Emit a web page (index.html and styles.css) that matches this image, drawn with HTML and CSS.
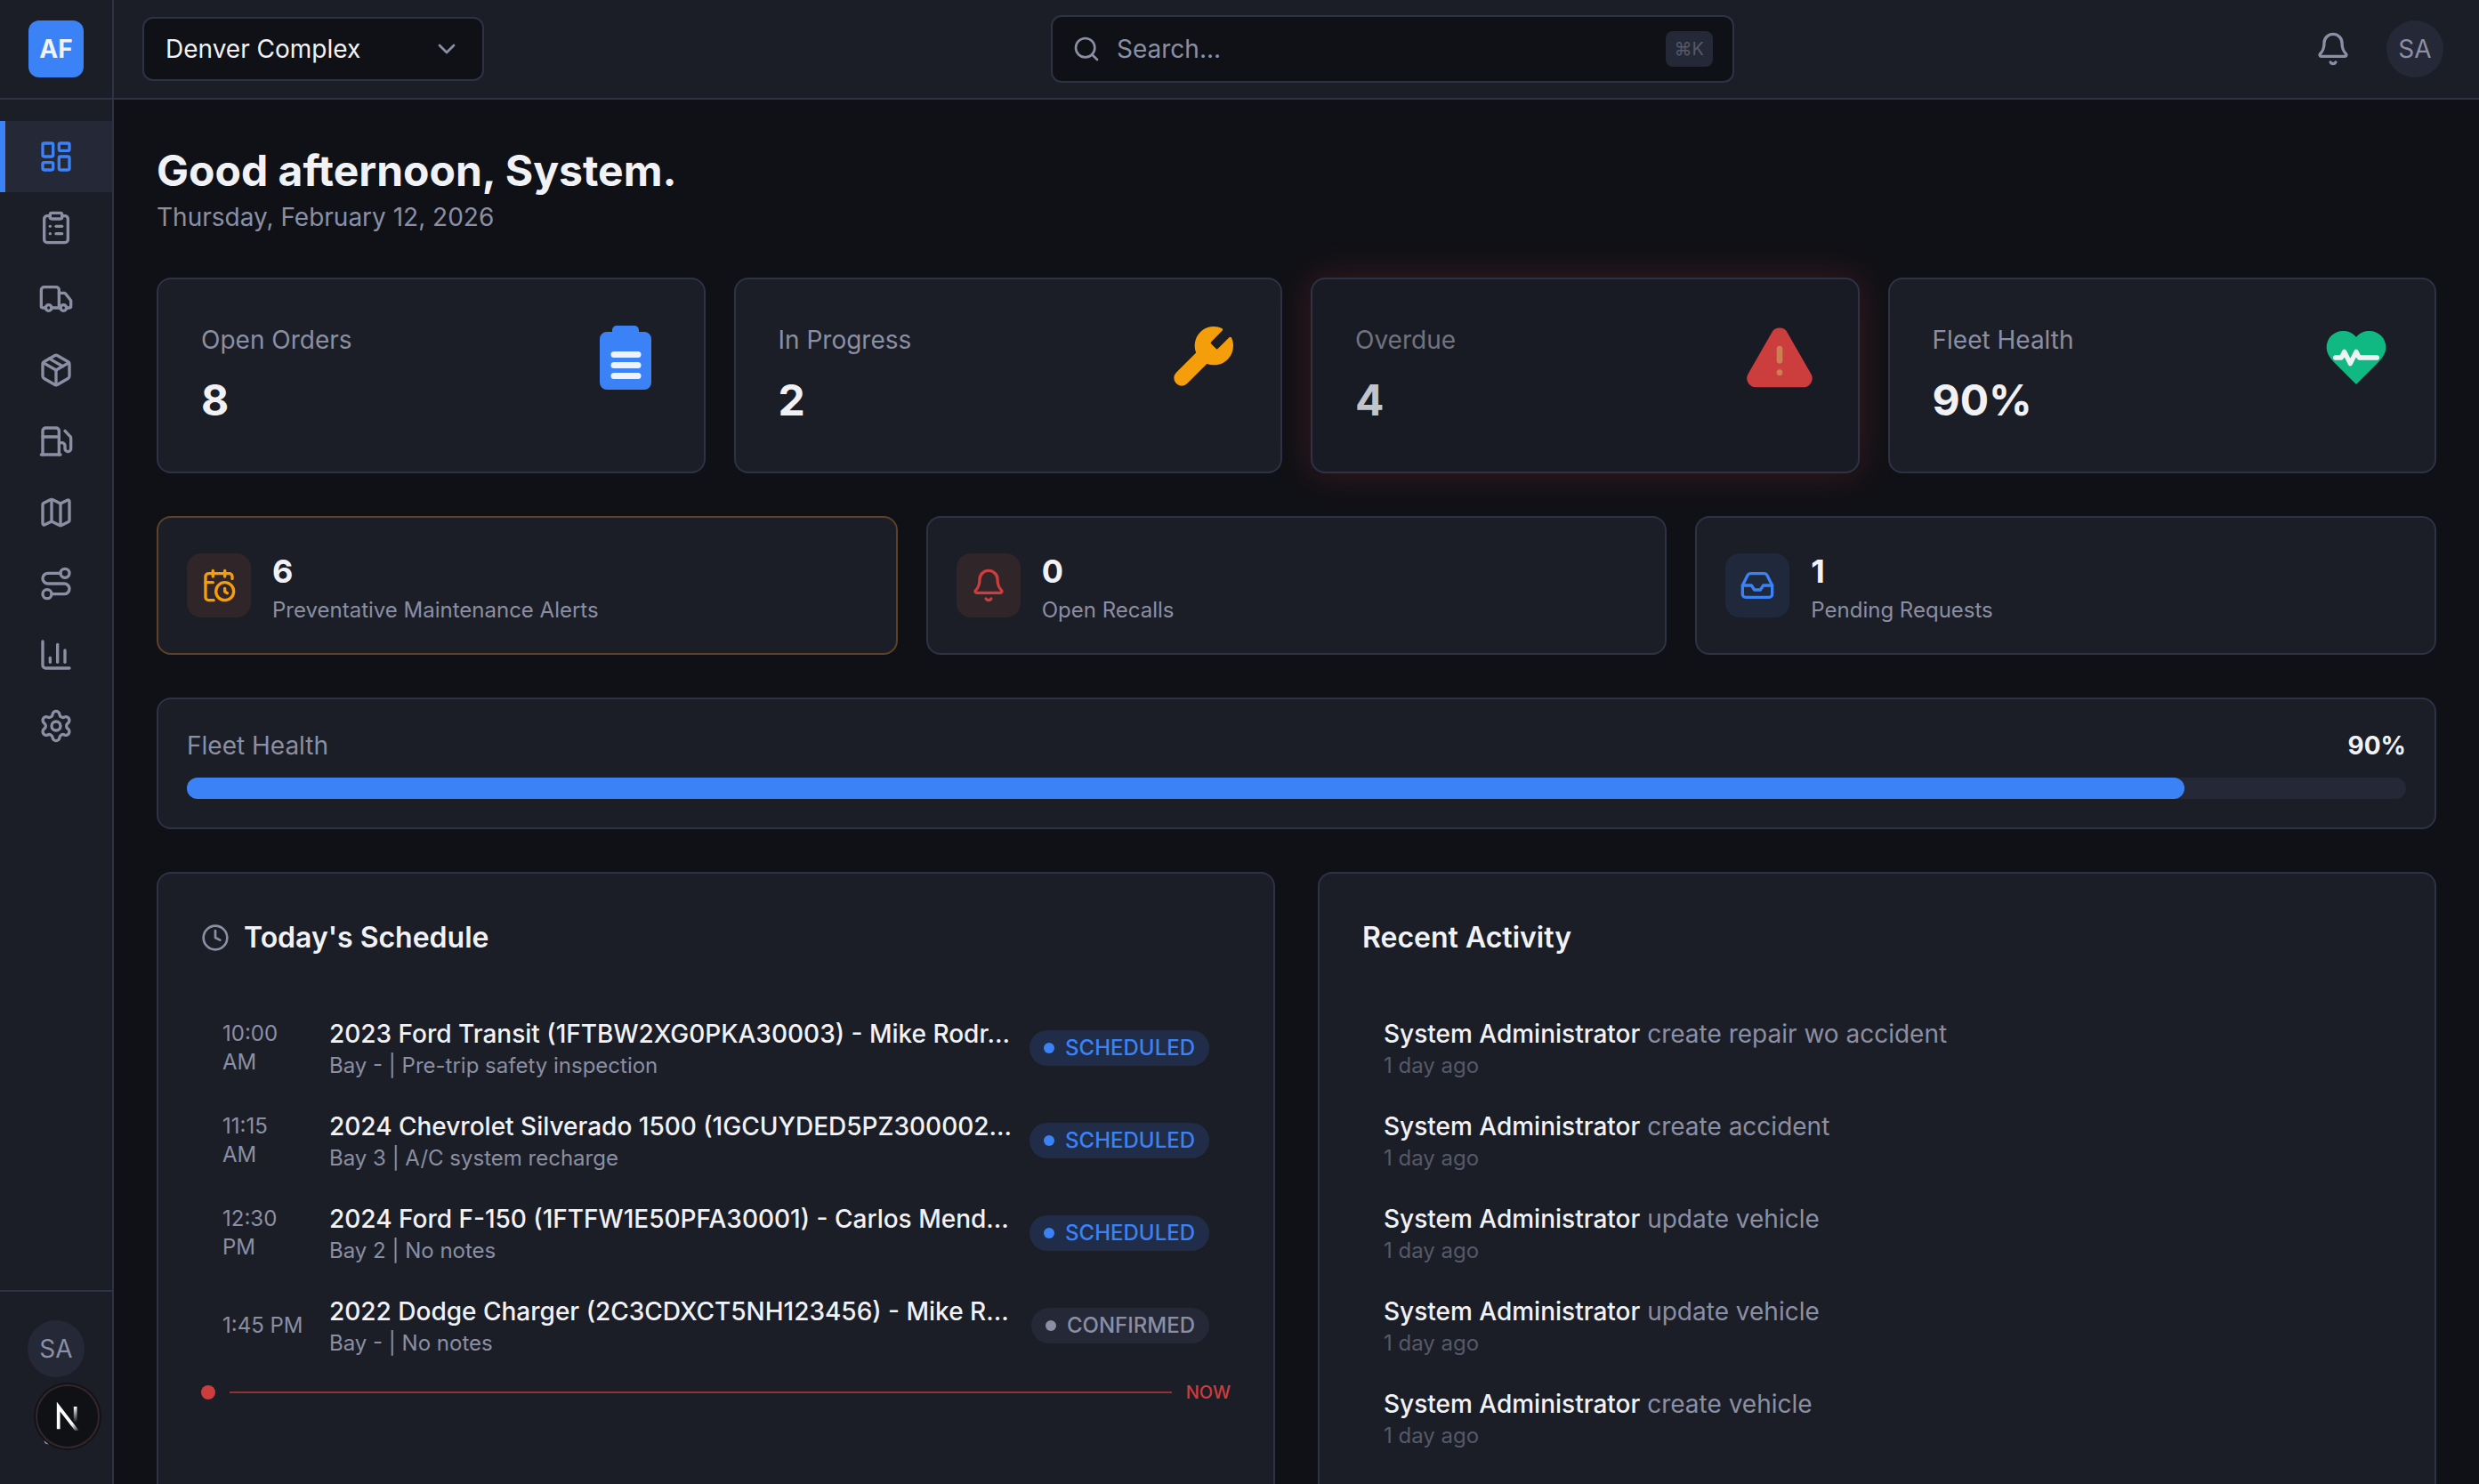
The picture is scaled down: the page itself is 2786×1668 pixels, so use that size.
FILE: index.html
```html
<!DOCTYPE html>
<html lang="en">
<head>
    <meta charset="UTF-8">
    <meta name="viewport" content="width=device-width, initial-scale=1.0">
    <title>Dashboard</title>
    <link rel="stylesheet" href="styles.css">
</head>
<body>
    <div class="app">
        <aside class="sidebar">
            <div class="brand">
                <a class="logo" href="#">AF</a>
            </div>

            <nav class="nav" aria-label="Main">
                <a class="nav-item active" href="#" aria-label="Dashboard">
                    <svg class="icon" viewBox="0 0 24 24"><rect x="3" y="3" width="7" height="9" rx="1"/><rect x="14" y="3" width="7" height="5" rx="1"/><rect x="14" y="12" width="7" height="9" rx="1"/><rect x="3" y="16" width="7" height="5" rx="1"/></svg>
                </a>
                <a class="nav-item" href="#" aria-label="Work orders">
                    <svg class="icon" viewBox="0 0 24 24"><rect x="8" y="2" width="8" height="4" rx="1"/><path d="M16 4h2a2 2 0 0 1 2 2v14a2 2 0 0 1-2 2H6a2 2 0 0 1-2-2V6a2 2 0 0 1 2-2h2"/><path d="M12 11h4"/><path d="M12 16h4"/><path d="M8 11h.01"/><path d="M8 16h.01"/></svg>
                </a>
                <a class="nav-item" href="#" aria-label="Vehicles">
                    <svg class="icon" viewBox="0 0 24 24"><path d="M14 18V6a2 2 0 0 0-2-2H4a2 2 0 0 0-2 2v11a1 1 0 0 0 1 1h2"/><path d="M15 18H9"/><path d="M19 18h2a1 1 0 0 0 1-1v-3.65a1 1 0 0 0-.22-.624l-3.48-4.35A1 1 0 0 0 17.52 8H14"/><circle cx="17" cy="18" r="2"/><circle cx="7" cy="18" r="2"/></svg>
                </a>
                <a class="nav-item" href="#" aria-label="Parts">
                    <svg class="icon" viewBox="0 0 24 24"><path d="M11 21.73a2 2 0 0 0 2 0l7-4A2 2 0 0 0 21 16V8a2 2 0 0 0-1-1.73l-7-4a2 2 0 0 0-2 0l-7 4A2 2 0 0 0 3 8v8a2 2 0 0 0 1 1.73z"/><path d="M12 22V12"/><path d="M3.29 7 12 12l8.71-5"/><path d="m7.5 4.27 9 5.15"/></svg>
                </a>
                <a class="nav-item" href="#" aria-label="Fuel">
                    <svg class="icon" viewBox="0 0 24 24"><path d="M14 13h2a2 2 0 0 1 2 2v2a2 2 0 0 0 4 0v-6.998a2 2 0 0 0-.59-1.42L18 5"/><path d="M14 21V5a2 2 0 0 0-2-2H5a2 2 0 0 0-2 2v16"/><path d="M2 21h13"/><path d="M3 9h11"/></svg>
                </a>
                <a class="nav-item" href="#" aria-label="Map">
                    <svg class="icon" viewBox="0 0 24 24"><path d="M14.106 5.553a2 2 0 0 0 1.788 0l3.659-1.83A1 1 0 0 1 21 4.619v12.764a1 1 0 0 1-.553.894l-4.553 2.277a2 2 0 0 1-1.788 0l-4.212-2.106a2 2 0 0 0-1.788 0l-3.659 1.83A1 1 0 0 1 3 19.381V6.618a1 1 0 0 1 .553-.894l4.553-2.277a2 2 0 0 1 1.788 0z"/><path d="M15 5.764v15"/><path d="M9 3.236v15"/></svg>
                </a>
                <a class="nav-item" href="#" aria-label="Routes">
                    <svg class="icon" viewBox="0 0 24 24"><circle cx="6" cy="19" r="3"/><path d="M9 19h8.5a3.5 3.5 0 0 0 0-7h-11a3.5 3.5 0 0 1 0-7H15"/><circle cx="18" cy="5" r="3"/></svg>
                </a>
                <a class="nav-item" href="#" aria-label="Reports">
                    <svg class="icon" viewBox="0 0 24 24"><path d="M3 3v16a2 2 0 0 0 2 2h16"/><path d="M18 17V9"/><path d="M13 17V5"/><path d="M8 17v-3"/></svg>
                </a>
                <a class="nav-item" href="#" aria-label="Settings">
                    <svg class="icon" viewBox="0 0 24 24"><path d="M9.671 4.136a2.34 2.34 0 0 1 4.659 0 2.34 2.34 0 0 0 3.319 1.915 2.34 2.34 0 0 1 2.33 4.033 2.34 2.34 0 0 0 0 3.831 2.34 2.34 0 0 1-2.33 4.033 2.34 2.34 0 0 0-3.319 1.915 2.34 2.34 0 0 1-4.659 0 2.34 2.34 0 0 0-3.32-1.915 2.34 2.34 0 0 1-2.33-4.033 2.34 2.34 0 0 0 0-3.831A2.34 2.34 0 0 1 6.35 6.051a2.34 2.34 0 0 0 3.319-1.915"/><circle cx="12" cy="12" r="3"/></svg>
                </a>
            </nav>

            <div class="sidebar-footer">
                <span class="avatar">SA</span>
                <button class="logout" type="button" aria-label="Log out">
                    <svg class="icon icon-sm" viewBox="0 0 24 24"><path d="m16 17 5-5-5-5"/><path d="M21 12H9"/><path d="M9 21H5a2 2 0 0 1-2-2V5a2 2 0 0 1 2-2h4"/></svg>
                </button>
            </div>
        </aside>

        <div class="page">
            <header class="topbar">
                <div class="location">
                    <select class="location-select" aria-label="Location">
                        <option>Denver Complex</option>
                    </select>
                    <svg class="icon icon-sm location-chevron" viewBox="0 0 24 24"><path d="m6 9 6 6 6-6"/></svg>
                </div>

                <label class="search">
                    <svg class="icon icon-sm" viewBox="0 0 24 24"><path d="m21 21-4.34-4.34"/><circle cx="11" cy="11" r="8"/></svg>
                    <input class="search-input" type="text" placeholder="Search..." aria-label="Search">
                    <kbd class="search-key">⌘K</kbd>
                </label>

                <div class="topbar-actions">
                    <button class="bell-button" type="button" aria-label="Notifications">
                        <svg class="icon" viewBox="0 0 24 24"><path d="M10.268 21a2 2 0 0 0 3.464 0"/><path d="M3.262 15.326A1 1 0 0 0 4 17h16a1 1 0 0 0 .74-1.673C19.41 13.956 18 12.499 18 8A6 6 0 0 0 6 8c0 4.499-1.411 5.956-2.738 7.326"/></svg>
                    </button>
                    <button class="avatar" type="button">SA</button>
                </div>
            </header>

            <main class="content">
                <div class="greeting">
                    <h1>Good afternoon, System.</h1>
                    <p>Thursday, February 12, 2026</p>
                </div>

                <section class="stats">
                    <div class="card stat">
                        <div>
                            <div class="stat-label">Open Orders</div>
                            <div class="stat-value">8</div>
                        </div>
                        <svg class="stat-icon" viewBox="0 0 80 80">
                            <path class="fill-blue" d="M30 4h20a5 5 0 0 1 5 5v2h6a8 8 0 0 1 8 8v49a8 8 0 0 1-8 8H19a8 8 0 0 1-8-8V19a8 8 0 0 1 8-8h6V9a5 5 0 0 1 5-5z"/>
                            <path class="lines" d="M27 36.5h27M27 48.5h27M27 60.5h27"/>
                        </svg>
                    </div>
                    <div class="card stat">
                        <div>
                            <div class="stat-label">In Progress</div>
                            <div class="stat-value">2</div>
                        </div>
                        <svg class="stat-icon" viewBox="0 0 24 24">
                            <path class="wrench" d="M14.7 6.3a1 1 0 0 0 0 1.4l1.6 1.6a1 1 0 0 0 1.4 0l3.77-3.77a6 6 0 0 1-7.94 7.94l-6.91 6.91a2.12 2.12 0 0 1-3-3l6.91-6.91a6 6 0 0 1 7.94-7.94l-3.76 3.76z"/>
                        </svg>
                    </div>
                    <div class="card stat overdue">
                        <div>
                            <div class="stat-label">Overdue</div>
                            <div class="stat-value">4</div>
                        </div>
                        <svg class="stat-icon" viewBox="0 0 24 24">
                            <path class="warning" d="m21.73 18-8-14a2 2 0 0 0-3.48 0l-8 14A2 2 0 0 0 4 21h16a2 2 0 0 0 1.73-3"/>
                            <path class="warning-mark" d="M12 9v4M12 17h.01"/>
                        </svg>
                    </div>
                    <div class="card stat">
                        <div>
                            <div class="stat-label">Fleet Health</div>
                            <div class="stat-value">90%</div>
                        </div>
                        <svg class="stat-icon" viewBox="0 0 24 24">
                            <path class="fill-green" d="M19 14c1.49-1.46 3-3.21 3-5.5A5.5 5.5 0 0 0 16.5 3c-1.76 0-3 .5-4.5 2-1.5-1.5-2.74-2-4.5-2A5.5 5.5 0 0 0 2 8.5c0 2.3 1.5 4.05 3 5.5l7 7Z"/>
                            <path class="pulse" d="M5 12h2l1-2 2 4 2-4 1 2h6"/>
                        </svg>
                    </div>
                </section>

                <section class="alerts">
                    <div class="card alert alert-warning">
                        <span class="alert-icon orange">
                            <svg class="icon" viewBox="0 0 24 24"><path d="M16 14v2.2l1.6 1"/><path d="M16 2v4"/><path d="M21 7.5V6a2 2 0 0 0-2-2H5a2 2 0 0 0-2 2v14a2 2 0 0 0 2 2h3.5"/><path d="M3 10h5"/><path d="M8 2v4"/><circle cx="16" cy="16" r="6"/></svg>
                        </span>
                        <div>
                            <div class="alert-value">6</div>
                            <div class="alert-label">Preventative Maintenance Alerts</div>
                        </div>
                    </div>
                    <div class="card alert">
                        <span class="alert-icon red">
                            <svg class="icon" viewBox="0 0 24 24"><path d="M10.268 21a2 2 0 0 0 3.464 0"/><path d="M3.262 15.326A1 1 0 0 0 4 17h16a1 1 0 0 0 .74-1.673C19.41 13.956 18 12.499 18 8A6 6 0 0 0 6 8c0 4.499-1.411 5.956-2.738 7.326"/></svg>
                        </span>
                        <div>
                            <div class="alert-value">0</div>
                            <div class="alert-label">Open Recalls</div>
                        </div>
                    </div>
                    <div class="card alert">
                        <span class="alert-icon blue">
                            <svg class="icon" viewBox="0 0 24 24"><path d="M22 12h-6l-2 3h-4l-2-3H2"/><path d="M5.45 5.11 2 12v6a2 2 0 0 0 2 2h16a2 2 0 0 0 2-2v-6l-3.45-6.89A2 2 0 0 0 16.76 4H7.24a2 2 0 0 0-1.79 1.11z"/></svg>
                        </span>
                        <div>
                            <div class="alert-value">1</div>
                            <div class="alert-label">Pending Requests</div>
                        </div>
                    </div>
                </section>

                <section class="card health">
                    <div class="health-head">
                        <span class="health-label">Fleet Health</span>
                        <span class="health-value">90%</span>
                    </div>
                    <div class="health-track">
                        <div class="health-bar" style="width: 90%"></div>
                    </div>
                </section>

                <section class="panels">
                    <div class="card panel">
                        <h2>
                            <svg class="icon icon-sm" viewBox="0 0 24 24"><circle cx="12" cy="12" r="10"/><path d="M12 6v6l4 2"/></svg>
                            Today's Schedule
                        </h2>
                        <div class="schedule-row">
                            <div class="time">10:00<br>AM</div>
                            <div class="job">
                                <div class="job-title">2023 Ford Transit (1FTBW2XG0PKA30003) - Mike Rodr...</div>
                                <div class="job-note">Bay - | Pre-trip safety inspection</div>
                            </div>
                            <span class="badge scheduled">SCHEDULED</span>
                        </div>
                        <div class="schedule-row">
                            <div class="time">11:15<br>AM</div>
                            <div class="job">
                                <div class="job-title">2024 Chevrolet Silverado 1500 (1GCUYDED5PZ300002...</div>
                                <div class="job-note">Bay 3 | A/C system recharge</div>
                            </div>
                            <span class="badge scheduled">SCHEDULED</span>
                        </div>
                        <div class="schedule-row">
                            <div class="time">12:30<br>PM</div>
                            <div class="job">
                                <div class="job-title">2024 Ford F-150 (1FTFW1E50PFA30001) - Carlos Mend...</div>
                                <div class="job-note">Bay 2 | No notes</div>
                            </div>
                            <span class="badge scheduled">SCHEDULED</span>
                        </div>
                        <div class="schedule-row">
                            <div class="time">1:45 PM</div>
                            <div class="job">
                                <div class="job-title">2022 Dodge Charger (2C3CDXCT5NH123456) - Mike R...</div>
                                <div class="job-note">Bay - | No notes</div>
                            </div>
                            <span class="badge">CONFIRMED</span>
                        </div>
                        <div class="now">
                            <span class="now-dot"></span>
                            <span class="now-line"></span>
                            <span>NOW</span>
                        </div>
                    </div>

                    <div class="card panel">
                        <h2>Recent Activity</h2>
                        <div class="activity">
                            <div class="activity-text"><b>System Administrator</b> create repair wo accident</div>
                            <div class="activity-time">1 day ago</div>
                        </div>
                        <div class="activity">
                            <div class="activity-text"><b>System Administrator</b> create accident</div>
                            <div class="activity-time">1 day ago</div>
                        </div>
                        <div class="activity">
                            <div class="activity-text"><b>System Administrator</b> update vehicle</div>
                            <div class="activity-time">1 day ago</div>
                        </div>
                        <div class="activity">
                            <div class="activity-text"><b>System Administrator</b> update vehicle</div>
                            <div class="activity-time">1 day ago</div>
                        </div>
                        <div class="activity">
                            <div class="activity-text"><b>System Administrator</b> create vehicle</div>
                            <div class="activity-time">1 day ago</div>
                        </div>
                    </div>
                </section>
            </main>
        </div>
    </div>

    <!-- dev tools badge -->
    <button class="dev-badge" type="button" aria-label="Open dev tools">
        <svg viewBox="-0.5 -1.5 16 16">
            <defs>
                <linearGradient id="fade-diagonal" gradientUnits="userSpaceOnUse" x1="9.9" y1="11" x2="13.4" y2="15.4">
                    <stop stop-color="#fff"/>
                    <stop offset="1" stop-color="#fff" stop-opacity="0"/>
                </linearGradient>
                <linearGradient id="fade-stem" gradientUnits="userSpaceOnUse" x1="12" y1="1" x2="12" y2="10">
                    <stop stop-color="#fff"/>
                    <stop offset="1" stop-color="#fff" stop-opacity="0"/>
                </linearGradient>
            </defs>
            <path d="M13.3 15.2 2.34 1v12.6" fill="none" stroke="url(#fade-diagonal)" stroke-width="1.86"/>
            <rect x="10.9" y="1" width="1.86" height="11.6" fill="url(#fade-stem)"/>
        </svg>
    </button>
</body>
</html>
```
FILE: styles.css
```css
:root {
    --bg: #101116;
    --surface: #1c1e27;
    --raised: #252836;
    --border: #2e3245;
    --text: #f1f2f6;
    --muted: #8b8fa3;
    --faint: #555969;
    --blue: #3b82f6;
    --orange: #f59e0b;
    --red: #cc3d3d;
    --green: #10b981;
}

* {
    box-sizing: border-box;
}

body {
    margin: 0;
    font-family: Inter, "Liberation Sans", sans-serif;
    font-size: 28px;
    line-height: 40px;
    background-color: var(--bg);
    color: var(--text);
}

h1, h2, p {
    margin: 0;
}

button, input, select, kbd {
    font-family: inherit;
    font-size: inherit;
    color: inherit;
}

button {
    border: none;
    padding: 0;
    background: none;
    cursor: pointer;
}

a {
    color: inherit;
    text-decoration: none;
}

.icon {
    width: 40px;
    height: 40px;
    flex-shrink: 0;
    fill: none;
    stroke: currentColor;
    stroke-width: 2;
    stroke-linecap: round;
    stroke-linejoin: round;
}

.icon-sm {
    width: 32px;
    height: 32px;
}

.app {
    display: flex;
    height: 100vh;
    overflow: hidden;
}

/* sidebar */
.sidebar {
    width: 128px;
    flex-shrink: 0;
    display: flex;
    flex-direction: column;
    background-color: var(--surface);
    border-right: 2px solid var(--border);
    color: var(--muted);
}

.brand {
    height: 112px;
    padding: 0 32px;
    display: flex;
    align-items: center;
    border-bottom: 2px solid var(--border);
}

.logo {
    flex: 1;
    height: 64px;
    line-height: 64px;
    border-radius: 12px;
    background-color: var(--blue);
    color: var(--text);
    font-weight: 700;
    text-align: center;
}

.nav {
    flex: 1;
    padding: 24px 0;
}

.nav-item {
    height: 80px;
    display: flex;
    align-items: center;
    justify-content: center;
}

.nav-item.active {
    background-color: var(--raised);
    box-shadow: inset 6px 0 var(--blue);
    color: var(--blue);
}

.sidebar-footer {
    display: flex;
    flex-direction: column;
    align-items: center;
    gap: 36px;
    padding: 32px 0;
    border-top: 2px solid var(--border);
}

.avatar {
    width: 64px;
    height: 64px;
    line-height: 64px;
    border-radius: 50%;
    background-color: var(--raised);
    color: var(--muted);
    text-align: center;
}

.logout {
    height: 52px;
    display: flex;
    align-items: center;
}

/* top bar */
.page {
    flex: 1;
    min-width: 0;
    display: flex;
    flex-direction: column;
}

.topbar {
    height: 112px;
    flex-shrink: 0;
    padding: 0 40px 0 32px;
    display: flex;
    align-items: center;
    justify-content: space-between;
    background-color: var(--surface);
    border-bottom: 2px solid var(--border);
}

.location {
    display: grid;
    align-items: center;
    width: 384px;
}

.location-select {
    grid-area: 1 / 1;
    height: 72px;
    padding: 0 24px;
    appearance: none;
    border: 2px solid var(--border);
    border-radius: 12px;
    background-color: var(--bg);
}

.location-chevron {
    grid-area: 1 / 1;
    justify-self: end;
    margin-right: 26px;
    color: var(--muted);
    pointer-events: none;
}

.search {
    width: 768px;
    height: 76px;
    padding: 0 22px;
    display: flex;
    align-items: center;
    gap: 18px;
    border: 2px solid var(--border);
    border-radius: 12px;
    background-color: var(--bg);
    color: var(--muted);
}

.search-input {
    flex: 1;
    min-width: 0;
    padding: 0;
    border: none;
    outline: none;
    background: none;
}

.search-input::placeholder {
    color: var(--muted);
    opacity: 1;
}

.search-key {
    padding: 0 10px;
    border-radius: 8px;
    background-color: var(--raised);
    color: var(--faint);
    font-size: 20px;
}

.topbar-actions {
    display: flex;
    align-items: center;
    gap: 24px;
}

.bell-button {
    width: 72px;
    height: 72px;
    display: flex;
    align-items: center;
    justify-content: center;
    color: var(--muted);
}

/* content */
.content {
    flex: 1;
    min-height: 0;
    overflow: hidden;
    padding: 48px;
}

.greeting p {
    color: var(--muted);
}

h1 {
    font-size: 48px;
    line-height: 64px;
    font-weight: 700;
}

.card {
    background-color: var(--surface);
    border: 2px solid var(--border);
    border-radius: 16px;
}

.stats,
.alerts,
.health,
.panels {
    margin-top: 48px;
}

.stats {
    display: grid;
    grid-template-columns: repeat(4, 1fr);
    gap: 32px;
}

.stat {
    padding: 48px;
    display: flex;
    justify-content: space-between;
}

.stat-label {
    margin-bottom: 16px;
    color: var(--muted);
}

.stat-value {
    font-size: 48px;
    line-height: 64px;
    font-weight: 700;
}

.stat-icon {
    width: 80px;
    height: 80px;
}

.fill-blue {
    fill: var(--blue);
}

.fill-green {
    fill: var(--green);
}

.lines {
    stroke: var(--text);
    stroke-width: 7;
    stroke-linecap: round;
}

.wrench {
    fill: var(--orange);
    stroke: var(--orange);
    stroke-linejoin: round;
}

.warning {
    fill: var(--red);
    stroke: var(--red);
    stroke-width: 2;
    stroke-linejoin: round;
}

.warning-mark {
    stroke: #cb7f53;
    stroke-width: 2;
    stroke-linecap: round;
}

.pulse {
    fill: none;
    stroke: var(--text);
    stroke-width: 1.6;
    stroke-linecap: round;
    stroke-linejoin: round;
}

.overdue {
    background-color: #191b24;
    box-shadow: 0 0 40px rgba(204, 61, 61, 0.22);
}

.overdue .stat-label {
    color: #70737f;
}

.overdue .stat-value {
    color: #c2c4cb;
}

.alerts {
    display: grid;
    grid-template-columns: repeat(3, 1fr);
    gap: 32px;
}

.alert {
    padding: 32px;
    display: flex;
    align-items: center;
    gap: 24px;
}

.alert-warning {
    border-color: #5f4226;
}

.alert-icon {
    width: 72px;
    height: 72px;
    border-radius: 16px;
    display: flex;
    align-items: center;
    justify-content: center;
}

.alert-icon.orange {
    background-color: #302529;
    color: var(--orange);
}

.alert-icon.red {
    background-color: #302529;
    color: var(--red);
}

.alert-icon.blue {
    background-color: #20283b;
    color: var(--blue);
}

.alert-value {
    font-size: 36px;
    line-height: 56px;
    font-weight: 700;
}

.alert-label {
    font-size: 24px;
    line-height: 32px;
    color: var(--muted);
}

.health {
    padding: 32px;
}

.health-head {
    display: flex;
    justify-content: space-between;
    margin-bottom: 16px;
}

.health-label {
    color: var(--muted);
}

.health-value {
    font-weight: 700;
}

.health-track {
    height: 24px;
    border-radius: 12px;
    background-color: var(--raised);
}

.health-bar {
    height: 100%;
    border-radius: 12px;
    background-color: var(--blue);
}

/* panels */
.panels {
    display: grid;
    grid-template-columns: repeat(2, minmax(0, 1fr));
    gap: 48px;
}

.panel {
    padding: 48px;
}

h2 {
    display: flex;
    align-items: center;
    gap: 16px;
    margin-bottom: 48px;
    font-size: 32px;
    line-height: 48px;
    font-weight: 600;
}

h2 .icon {
    color: var(--muted);
}

.schedule-row {
    display: flex;
    align-items: center;
    gap: 24px;
    padding: 16px 24px;
}

.time {
    width: 96px;
    flex-shrink: 0;
    font-size: 24px;
    line-height: 32px;
    color: var(--muted);
}

.job {
    flex: 1;
    min-width: 0;
    white-space: nowrap;
}

.job-title {
    font-weight: 500;
}

.job-note {
    font-size: 24px;
    line-height: 32px;
    color: var(--muted);
}

.badge {
    display: flex;
    align-items: center;
    gap: 12px;
    padding: 4px 16px;
    border-radius: 20px;
    background-color: var(--raised);
    color: var(--muted);
    font-size: 24px;
    line-height: 32px;
    font-weight: 500;
}

.badge::before {
    content: "";
    width: 12px;
    height: 12px;
    border-radius: 50%;
    background-color: currentColor;
}

.badge.scheduled {
    background-color: #202c48;
    color: var(--blue);
}

.now {
    display: flex;
    align-items: center;
    gap: 16px;
    margin-top: 8px;
    font-size: 20px;
    line-height: 30px;
    font-weight: 500;
    color: var(--red);
}

.now-dot {
    width: 16px;
    height: 16px;
    border-radius: 50%;
    background-color: var(--red);
}

.now-line {
    flex: 1;
    height: 2px;
    background-color: #8f3334;
}

.activity {
    padding: 16px 24px;
}

.activity-text {
    color: var(--muted);
}

.activity-text b {
    font-weight: 500;
    color: var(--text);
}

.activity-time {
    font-size: 24px;
    line-height: 32px;
    color: var(--faint);
}

.dev-badge {
    position: fixed;
    left: 40px;
    bottom: 40px;
    width: 72px;
    height: 72px;
    display: flex;
    align-items: center;
    justify-content: center;
    border: 2px solid #33272c;
    border-radius: 50%;
    background-color: #101114;
    box-shadow: 0 0 0 2px #121318;
}

.dev-badge svg {
    width: 32px;
    height: 32px;
    flex-shrink: 0;
}
```
